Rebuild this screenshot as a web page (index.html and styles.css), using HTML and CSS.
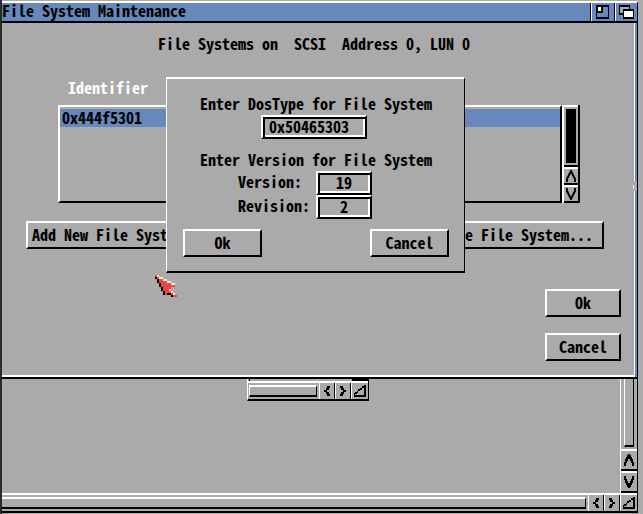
FILE: index.html
```html
<!DOCTYPE html>
<html lang="en">
<head>
<meta charset="utf-8">
<title>File System Maintenance</title>
<link rel="stylesheet" href="styles.css">
</head>
<body>
<svg class="symbols" aria-hidden="true">
  <symbol id="up" viewBox="0 0 10 12"><path shape-rendering="crispEdges" d="M0 12V8H1V5H2V3H3V1H4V0H6V1H7V3H8V5H9V8H10V12H8V9H7V7H6V5H4V7H3V9H2V12Z"/></symbol>
  <symbol id="right" viewBox="0 0 8 10"><path shape-rendering="crispEdges" d="M1 0H4V2H5V4H7V6H5V8H4V10H1V8H2V6H4V4H2V2H1Z"/></symbol>
  <symbol id="size" viewBox="0 0 12 12"><path shape-rendering="crispEdges" d="M10 0H12V12H0V8H1V10H10ZM8 1H10V3H8ZM6 3H8V5H6ZM4 4H6V6H4ZM3 6H4V8H3ZM1 7H3V9H1Z"/></symbol>
</svg>
<div class="screen">
  <section class="window back">
    <div class="back-space"></div>
    <div class="vscroll">
      <div class="knob"></div>
      <button class="arrow" aria-label="Scroll up"><svg class="v"><use href="#up"/></svg></button>
      <button class="arrow" aria-label="Scroll down"><svg class="v flip"><use href="#up"/></svg></button>
    </div>
    <div class="hscroll">
      <div class="knob"></div>
      <button class="arrow" aria-label="Scroll left"><svg class="h flip"><use href="#right"/></svg></button>
      <button class="arrow" aria-label="Scroll right"><svg class="h"><use href="#right"/></svg></button>
      <button class="arrow size" aria-label="Resize"><svg class="s"><use href="#size"/></svg></button>
    </div>
  </section>

  <section class="window small">
    <div class="small-space"></div>
    <div class="hscroll">
      <div class="knob"></div>
      <button class="arrow" aria-label="Scroll left"><svg class="h flip"><use href="#right"/></svg></button>
      <button class="arrow" aria-label="Scroll right"><svg class="h"><use href="#right"/></svg></button>
      <button class="arrow size" aria-label="Resize"><svg class="s"><use href="#size"/></svg></button>
    </div>
  </section>

  <main class="main">
    <header class="titlebar">
      <h1>File System Maintenance</h1>
      <button aria-label="Zoom"><svg width="13" height="14" shape-rendering="crispEdges"><path d="M0 0H13V14H0Z"/><path fill="#68b" d="M1 2H12V12H1Z"/><path d="M1 2H7V8H1Z"/><path fill="#fff" d="M2 2H5V6H2Z"/></svg></button>
      <button aria-label="Depth"><svg width="15" height="14" shape-rendering="crispEdges"><path d="M0 0H11V10H0Z"/><path fill="#aaa" d="M1 2H10V8H1Z"/><path d="M4 4H15V14H4Z"/><path fill="#fff" d="M5 6H14V12H5Z"/></svg></button>
    </header>
    <div class="body">
      <h2>File Systems on  SCSI  Address 0, LUN 0</h2>
      <p class="caption">Identifier</p>
      <div class="list">
        <ul><li>0x444f5301</li></ul>
        <div class="list-scroll">
          <div class="track"><div></div></div>
          <button aria-label="List up"><svg width="10" height="12"><path d="M1 12V9L5 1L9 9V12"/></svg></button>
          <button aria-label="List down"><svg width="10" height="12"><path d="M1 0V3L5 11L9 3V0"/></svg></button>
        </div>
      </div>
      <div class="tools">
        <button class="button">Add New File System...</button>
        <button class="button">Delete File System...</button>
      </div>
      <div class="actions">
        <button class="button">Ok</button>
        <button class="button">Cancel</button>
      </div>
    </div>
    <i class="notch"></i>
  </main>

  <form class="dialog" role="dialog" aria-label="File system type">
    <label for="dostype">Enter DosType for File System</label>
    <input id="dostype" class="field dostype" value="0x50465303">
    <p>Enter Version for File System</p>
    <div class="row"><label for="version">Version:</label><input id="version" class="field" value="19"></div>
    <div class="row"><label for="revision">Revision:</label><input id="revision" class="field" value="2"></div>
    <div class="choices">
      <button type="button" class="button">Ok</button>
      <button type="button" class="button">Cancel</button>
    </div>
  </form>

  <svg class="pointer" viewBox="0 0 11 11" shape-rendering="crispEdges" aria-hidden="true">
    <path d="M0 1h1v1h-1zM1 2h1v2h-1zM2 4h1v2h-1zM3 6h1v2h-1zM4 8h1v2h-1zM6 9h1v1h-1zM7 9h1v1h-1zM8 10h1v1h-1z"/>
    <path fill="#e44" d="M0 0h1v1h-1zM1 1h1v1h-1zM2 2h2v1h-2zM2 3h4v1h-4zM3 4h5v1h-5zM3 5h7v1h-7zM4 6h4v1h-4zM4 7h3v1h-3zM5 8h3v1h-3zM5 9h1v1h-1zM8 9h1v1h-1zM9 10h2v1h-2z"/>
    <path fill="#eec" d="M1 0h1v1h-1zM2 1h2v1h-2zM4 2h2v1h-2zM6 3h2v1h-2zM8 4h2v1h-2zM7 7h1v1h-1zM8 8h1v1h-1zM9 9h1v1h-1z"/>
  </svg>
</div>
</body>
</html>
```
FILE: styles.css
```css
* { box-sizing: border-box; }
body {
  margin: 0;
  background: #aaa;
  color: #000;
  font: bold 16px/20px "Noto Sans Mono CJK JP", "Liberation Mono", monospace;
  font-variant-numeric: slashed-zero;
}
h1, h2, p, ul { margin: 0; padding: 0; font: inherit; list-style: none; }
button, input { margin: 0; padding: 0; border: 0; border-radius: 0; background: #aaa; color: inherit; font: inherit; }
svg { display: block; }
.symbols { position: absolute; width: 0; height: 0; }
.screen { position: relative; min-height: 100vh; overflow: hidden; border-left: 2px solid #2a2a2a; }

.window { position: absolute; background: #aaa; border-right: 1px solid #000; border-bottom: 2px solid #000; }
.back {
  top: 300px; left: 0; right: 5px; bottom: 1px;
  display: grid;
  grid-template-columns: 1fr 17px;
  grid-template-rows: 1fr 18px;
}
.vscroll { display: flex; flex-direction: column; border-left: 1px solid #fff; }
.vscroll .knob {
  flex: 1; margin: 0 3px 2px;
  border-left: 1px solid #fff; border-right: 1px solid #000; border-bottom: 2px solid #000;
}
.vscroll .arrow { height: 22px; border-top: 2px solid #fff; border-bottom: 2px solid #000; }
.hscroll { grid-column: 1 / -1; display: flex; border-top: 2px solid #fff; height: 18px; }
.hscroll .knob {
  flex: 1; height: 12px; margin: 2px 2px 0 0;
  border-top: 2px solid #fff; border-right: 1px solid #000; border-bottom: 2px solid #000;
}
.arrow { display: grid; place-items: center; }
.hscroll .arrow { width: 16px; border-left: 1px solid #fff; border-right: 1px solid #000; }
.hscroll .size { width: 17px; border-right: 0; }
.v { width: 10px; height: 12px; }
.h { width: 8px; height: 10px; }
.s { width: 12px; height: 12px; }
.flip { transform: rotate(180deg); }
.small { top: 340px; left: 245px; width: 122px; border-left: 1px solid #fff; }
.small-space {
  height: 41px; margin-left: 1px; border-left: 1px solid #000;
  background: linear-gradient(#000, #000) right bottom / 16px 2px no-repeat;
}
.small .knob { margin-left: 1px; border-left: 1px solid #fff; }

.main {
  position: absolute; top: 1px; left: 0; right: 5px;
  background: linear-gradient(#68b, #68b) right / 2px 100% no-repeat #aaa;
  border-top: 2px solid #fff; border-right: 1px solid #000; border-bottom: 2px solid #000;
}
.titlebar { display: flex; height: 20px; background: #68b; border-bottom: 2px solid #000; line-height: 15px; }
.titlebar h1 { flex: 1; }
.titlebar button { width: 23px; padding-left: 4px; background: #68b; border-left: 1px solid #fff; box-shadow: -1px 0 #000; }
.titlebar button + button { width: 22px; padding-left: 3px; margin-left: 1px; }
.body { padding: 10px 30px 14px 24px; border-right: 1px solid #fff; border-bottom: 2px solid #fff; margin-right: 2px; }
h2 { white-space: pre; text-align: center; padding-right: 2px; }
.caption { color: #fff; margin: 24px 0 8px 42px; }
.list { display: flex; height: 98px; margin: 0 24px 0 32px; }
.list ul { flex: 1; padding-top: 2px; border: 2px solid; border-color: #fff #000 #000 #fff; }
.list li { height: 18px; padding-left: 2px; line-height: 16px; background: #68b; }
.list-scroll { display: flex; flex-direction: column; width: 18px; border-left: 2px solid #fff; border-right: 2px solid #000; }
.track { flex: 1; padding: 2px 2px; border-top: 2px solid #fff; border-bottom: 2px solid #000; }
.track div { height: 100%; background: #000; }
.list-scroll button { display: grid; place-items: center; height: 18px; border-top: 2px solid #fff; border-bottom: 2px solid #000; }
.list-scroll path { fill: none; stroke: #000; stroke-width: 2; }
.button {
  height: 28px; padding: 0 4px 2px; line-height: 22px;
  border: 2px solid; border-color: #fff #000 #000 #fff;
}
.tools { display: flex; justify-content: space-between; margin-top: 18px; }
.tools .button { padding-right: 9px; }
.actions { display: flex; flex-direction: column; align-items: flex-end; gap: 16px; margin: 40px -17px 0 0; }
.actions .button { width: 76px; }
.notch {
  position: absolute; right: 0; top: 178px; width: 4px; height: 10px;
  background: linear-gradient(#fff, #fff) 0 4px / 1px 4px no-repeat #aaa;
}

.dialog {
  position: absolute; top: 77px; left: 164px; width: 299px; padding: 14px 15px 14px 16px;
  display: flex; flex-direction: column; align-items: center;
  background: #aaa; border: solid; border-width: 2px 1px; border-color: #fff #000 #000 #fff;
}
.dialog > label { margin-bottom: 2px; }
.field {
  width: 56px; height: 24px; padding: 0 4px 2px; text-align: center;
  border: 2px solid; border-color: #fff #000 #000 #fff;
  box-shadow: inset 2px 2px #000, inset -2px -2px #fff;
}
.dostype { width: 106px; padding: 0 4px 2px 6px; margin-right: 4px; text-align: left; }
.dialog p { margin: 10px 0 2px; }
.row { display: flex; justify-content: space-between; width: 134px; margin-right: 22px; }
.choices { display: flex; justify-content: space-between; align-self: stretch; margin-top: 10px; }
.choices .button { width: 79px; }
.pointer { position: absolute; left: 153px; top: 275px; width: 22px; height: 22px; }
```
